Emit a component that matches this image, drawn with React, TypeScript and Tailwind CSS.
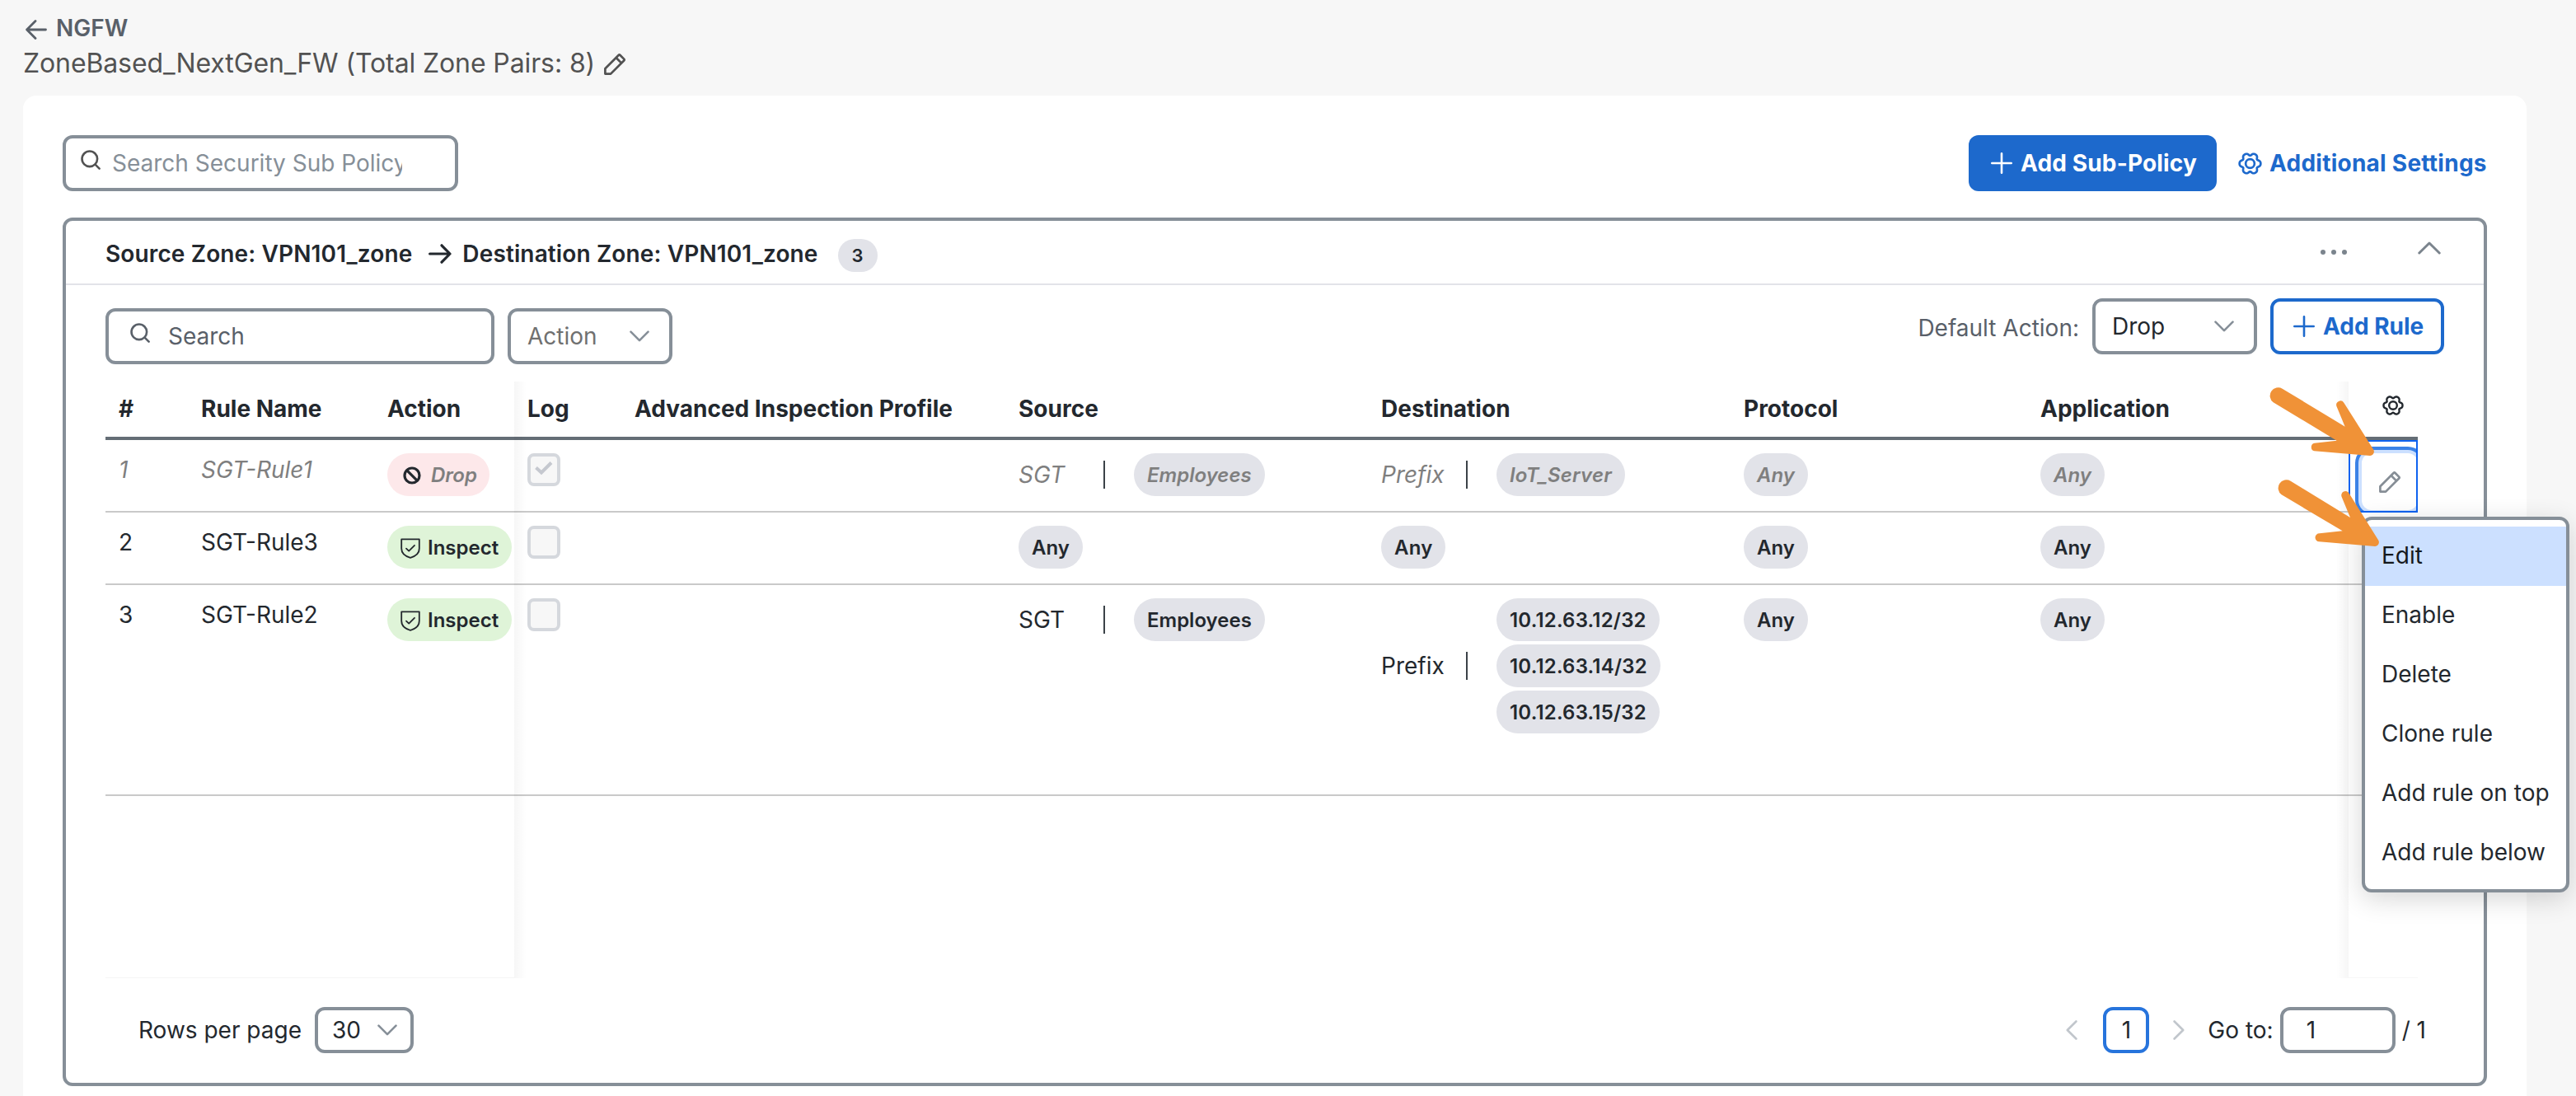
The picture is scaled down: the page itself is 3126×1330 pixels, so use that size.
import type { ReactNode } from "react";
import clsx from "clsx";

const GRID =
  "grid grid-cols-[100px_226px_170px_130px_466px_440px_440px_360px_390px_84px]";

const MENU = ["Edit", "Enable", "Delete", "Clone rule", "Add rule on top", "Add rule below"];

const HEADERS = [
  "#",
  "Rule Name",
  "Action",
  "Log",
  "Advanced Inspection Profile",
  "Source",
  "Destination",
  "Protocol",
  "Application",
];

type Match = { type?: string; values: string[] };

type Rule = {
  id: number;
  name: string;
  action: "Drop" | "Inspect";
  log: boolean;
  source: Match;
  destination: Match;
  protocol: string;
  application: string;
  disabled?: boolean;
};

const RULES: Rule[] = [
  {
    id: 1,
    name: "SGT-Rule1",
    action: "Drop",
    log: true,
    source: { type: "SGT", values: ["Employees"] },
    destination: { type: "Prefix", values: ["IoT_Server"] },
    protocol: "Any",
    application: "Any",
    disabled: true,
  },
  {
    id: 2,
    name: "SGT-Rule3",
    action: "Inspect",
    log: false,
    source: { values: ["Any"] },
    destination: { values: ["Any"] },
    protocol: "Any",
    application: "Any",
  },
  {
    id: 3,
    name: "SGT-Rule2",
    action: "Inspect",
    log: false,
    source: { type: "SGT", values: ["Employees"] },
    destination: {
      type: "Prefix",
      values: ["10.12.63.12/32", "10.12.63.14/32", "10.12.63.15/32"],
    },
    protocol: "Any",
    application: "Any",
  },
];

/* ---------- icons ---------- */

function SearchIcon({ className }: { className?: string }) {
  return (
    <svg viewBox="0 0 24 24" className={clsx("size-6 shrink-0", className)} fill="none" stroke="currentColor" strokeWidth="2.6" strokeLinecap="round">
      <circle cx="10.8" cy="10.8" r="9.3" />
      <path d="M17.6 17.6l5 5" />
    </svg>
  );
}

function Chevron({ className }: { className?: string }) {
  return (
    <svg viewBox="0 0 24 14" className={clsx("h-[14px] w-6 shrink-0", className)} fill="none" stroke="currentColor" strokeWidth="2.6" strokeLinecap="round" strokeLinejoin="round">
      <path d="M1.5 1.6L12 12.2 22.5 1.6" />
    </svg>
  );
}

function PlusIcon() {
  return (
    <svg viewBox="0 0 26 26" className="size-[26px] shrink-0" fill="none" stroke="currentColor" strokeWidth="2.6" strokeLinecap="round">
      <path d="M13 1.3v23.4M1.3 13h23.4" />
    </svg>
  );
}

// six-lobed cog outline
const GEAR_POINTS = Array.from({ length: 90 }, (_, i) => {
  const t = (i / 90) * Math.PI * 2;
  const r = 10.4 + 1.4 * Math.cos(6 * t) - 0.3 * Math.cos(12 * t);
  return `${(13 + r * Math.cos(t)).toFixed(2)},${(13 + r * Math.sin(t)).toFixed(2)}`;
}).join(" ");

function GearIcon({ className }: { className?: string }) {
  return (
    <svg viewBox="0 0 26 26" className={clsx("shrink-0", className)} fill="none" stroke="currentColor" strokeWidth="2.4" strokeLinejoin="round">
      <polygon points={GEAR_POINTS} />
      <circle cx="13" cy="13" r="4.8" />
    </svg>
  );
}

function PencilIcon({ className }: { className?: string }) {
  return (
    <svg viewBox="0 0 26 26" className={clsx("size-[26px] shrink-0", className)} fill="none" stroke="currentColor" strokeWidth="2.7" strokeLinejoin="round">
      <path d="M1.4 24.6V18.2L17.6 2Q18.6 1 19.6 2L24.2 6.6Q25.1 7.6 24.2 8.5L8.1 24.6Z" />
      <path d="M14.6 5l6.6 6.6" />
    </svg>
  );
}

function ShieldIcon() {
  return (
    <svg viewBox="0 0 24 25" className="h-[25px] w-6 shrink-0" fill="none" stroke="currentColor" strokeWidth="1.8" strokeLinecap="round" strokeLinejoin="round">
      <path d="M1.2 1.3H22.8V12.6C22.8 18.5 18.8 22 12 23.8C5.2 22 1.2 18.5 1.2 12.6Z" />
      <path d="M7 12.6l3.2 3L17 8.8" />
    </svg>
  );
}

function BlockIcon() {
  return (
    <svg viewBox="0 0 22 22" className="size-[22px] shrink-0" fill="none" stroke="currentColor" strokeWidth="3.2">
      <circle cx="11" cy="11" r="9" />
      <path d="M4.6 4.6l12.8 12.8" />
    </svg>
  );
}

/* ---------- small pieces ---------- */

function Pill({ children, disabled }: { children: ReactNode; disabled?: boolean }) {
  return (
    <span
      className={clsx(
        "inline-flex h-[52px] items-center rounded-full bg-[#e2e3e9] px-4 pt-0.5 text-2xl font-semibold",
        disabled && "text-[#7f7f7f] italic"
      )}
    >
      {children}
    </span>
  );
}

function ActionPill({ action, disabled }: { action: Rule["action"]; disabled?: boolean }) {
  if (action === "Drop") {
    return (
      <span className="flex h-[52px] w-[124px] items-center rounded-full bg-[#fde8ea] pl-[19px] pt-0.5 text-2xl font-semibold">
        <BlockIcon />
        <span className={clsx("ml-[12px]", disabled && "text-[#7f7f7f] italic")}>{action}</span>
      </span>
    );
  }
  return (
    <span className="flex h-[52px] w-[151px] items-center rounded-full bg-[#dff4d8] pl-4 pt-0.5 text-2xl font-semibold">
      <ShieldIcon />
      <span className="ml-[9px]">{action}</span>
    </span>
  );
}

function MatchCell({ match, disabled }: { match: Match; disabled?: boolean }) {
  return (
    <div className="flex items-center">
      {match.type && (
        <>
          <span className={clsx("w-[103px] tracking-normal", disabled && "text-[#7f7f7f] italic")}>{match.type}</span>
          <span className="mr-[35px] h-[34px] w-[2px] bg-[#3b4248]" />
        </>
      )}
      <div className="flex flex-col items-start gap-1">
        {match.values.map((v) => (
          <Pill key={v} disabled={disabled}>
            {v}
          </Pill>
        ))}
      </div>
    </div>
  );
}

function Checkbox({ checked }: { checked: boolean }) {
  return (
    <span className="flex size-10 items-center justify-center rounded-lg border-4 border-[#d5d8dd] bg-[#f7f7f7]">
      {checked && (
        <svg viewBox="0 0 22 18" className="mb-1 h-[18px] w-[22px]" fill="none" stroke="#c5c8cf" strokeWidth="4">
          <path d="M1.5 8.5l6.5 6L20 2.5" />
        </svg>
      )}
    </span>
  );
}

function RuleRow({ rule }: { rule: Rule }) {
  const dim = rule.disabled && "text-[#7f7f7f] italic";
  return (
    <div
      className={clsx(
        GRID,
        "border-b-2 border-[#c9c9c9]",
        rule.id === 3 ? "h-[256px]" : "h-[88px]"
      )}
    >
      <div className={clsx("px-4 pt-4", dim)}>{rule.id}</div>
      <div className={clsx("px-4 pt-4", dim)}>{rule.name}</div>
      <div className="pl-4 pt-4">
        <ActionPill action={rule.action} disabled={rule.disabled} />
      </div>
      <div className="px-4 pt-4">
        <Checkbox checked={rule.log} />
      </div>
      <div />
      <div className="px-4 pt-4">
        <MatchCell match={rule.source} disabled={rule.disabled} />
      </div>
      <div className="px-4 pt-4 tracking-[0.2px]">
        <MatchCell match={rule.destination} disabled={rule.disabled} />
      </div>
      <div className="px-4 pt-4">
        <Pill disabled={rule.disabled}>{rule.protocol}</Pill>
      </div>
      <div className="px-4 pt-4">
        <Pill disabled={rule.disabled}>{rule.application}</Pill>
      </div>
      {rule.id === 1 ? (
        <div className="relative h-[88px] overflow-hidden bg-white pl-4 pt-4">
          <div className="flex h-[69px] w-[68px] items-center justify-center rounded-xl bg-white text-[#868e96] shadow-[0_0_0_4px_#cce0ff,0_0_0_8px_#3b82e6]">
            <PencilIcon />
          </div>
          <div className="absolute inset-0 border-2 border-[#0f62f0]" />
        </div>
      ) : (
        <div />
      )}
    </div>
  );
}

function RulesTable() {
  return (
    <div className="relative mt-[18px] h-[727px] w-[2806px]">
      <div className={clsx(GRID, "h-[74px] border-b-4 border-[#646d75] font-bold")}>
        {HEADERS.map((h) => (
          <div key={h} className="whitespace-nowrap px-4 pt-4">
            {h}
          </div>
        ))}
        <div className="flex justify-center pl-6 pt-[19px]">
          <GearIcon className="size-[26px]" />
        </div>
      </div>
      {RULES.map((r) => (
        <RuleRow key={r.id} rule={r} />
      ))}
      {/* pinned column edges */}
      <div className="absolute bottom-0 left-0 top-[3px] w-[496px] border-b border-[#f5f5f5]" />
      <div className="absolute bottom-0 left-[496px] top-[3px] w-[15px] bg-linear-to-r from-black/[0.035] to-transparent" />
      <div className="absolute bottom-0 right-[84px] top-[3px] w-[15px] bg-linear-to-l from-black/[0.035] to-transparent" />
      <div className="absolute bottom-0 right-0 h-px w-[84px] bg-[#f7f7f7]" />
    </div>
  );
}

function Pager() {
  return (
    <div className="mt-[35px] flex h-14 items-center pl-[88px] pr-[70px]">
      <span>Rows per page</span>
      <div className="ml-4 flex h-14 w-[120px] items-center justify-between rounded-xl border-4 border-[#868f98] pl-[17px] pr-4">
        <span>30</span>
        <Chevron className="text-[#868f98]" />
      </div>
      <div className="ml-auto flex items-center">
        <Chevron className="rotate-90 text-[#c1c6cc]" />
        <div className="ml-[26px] flex size-14 items-center justify-center rounded-xl border-4 border-[#2774dc]">1</div>
        <Chevron className="ml-[24px] -rotate-90 text-[#c1c6cc]" />
        <span className="ml-[23px]">Go to:</span>
        <div className="ml-[8px] flex h-14 w-[140px] items-center rounded-xl border-4 border-[#868f98] pl-[28px]">1</div>
        <span className="ml-2">/ 1</span>
      </div>
    </div>
  );
}

function RowMenu() {
  return (
    <div className="absolute left-[2866px] top-[627px] h-[456px] w-[252px] rounded-xl border-4 border-[#868f98] bg-white py-2 shadow-[0_8px_32px_rgba(0,0,0,0.16)]">
      {MENU.map((m, i) => (
        <div
          key={m}
          className={clsx("flex h-[72px] items-center whitespace-nowrap pb-0.5 pl-5", i === 0 && "bg-[#cce0ff] text-[#14181c]")}
        >
          {m}
        </div>
      ))}
    </div>
  );
}

/* orange callout arrows drawn over the table */
function CalloutArrows() {
  return (
    <svg viewBox="0 0 446 300" className="absolute left-[2680px] top-[440px] h-[300px] w-[446px]" fill="#f09237">
      <g transform="scale(0.333333)">
        <path d="M269 95L497 233L466 158A15 15 0 0 1 493 146L601 317A15 15 0 0 1 588 339L385 322A15 15 0 0 1 386 293L467 284L236 145A30 30 0 0 1 269 95Z" />
        <path d="M299 431L516 564L485 489A15 15 0 0 1 512 476L619 647A15 15 0 0 1 606 669L403 652A15 15 0 0 1 404 622L488 613L266 481A30 30 0 0 1 299 431Z" />
      </g>
    </svg>
  );
}

export default function App() {
  return (
    <div className="relative h-[1330px] w-[3126px] overflow-hidden bg-[#f7f7f7] font-['Inter',sans-serif] text-[28px] leading-10 text-[#23282e]">
      <header className="h-[116px] pl-[28px] pt-[14px]">
        <div className="flex items-center text-[#596069]">
          <svg viewBox="0 0 26 24" className="ml-[3px] mt-1 h-6 w-[26px]" fill="none" stroke="currentColor" strokeWidth="2.8" strokeLinecap="round" strokeLinejoin="round">
            <path d="M24.5 12H1.6M12 1.5L1.6 12 12 22.5" />
          </svg>
          <span className="ml-[11px] font-semibold">NGFW</span>
        </div>
        <div className="mt-[3px] flex items-center text-[32px] text-[#525252]">
          <span className="tracking-[-0.11px]">ZoneBased_NextGen_FW (Total Zone Pairs: 8)</span>
          <PencilIcon className="ml-[11px] mt-0.5" />
        </div>
      </header>

      <main className="ml-[28px] h-[1300px] w-[3038px] rounded-t-[16px] bg-white px-12 pt-12">
        <div className="flex h-[68px] items-center justify-between">
          <div className="flex h-[68px] w-[480px] items-center rounded-xl border-4 border-[#868f98] pl-[18px] text-[#868f98]">
            <SearchIcon className="mb-2 text-[#525252]" />
            <span className="ml-[14px] w-[352px] overflow-hidden whitespace-nowrap">Search Security Sub Policy</span>
          </div>
          <div className="flex items-center">
            <button className="flex h-[68px] w-[301px] items-center rounded-xl bg-[#1d69cc] pl-[27px] font-bold text-white">
              <PlusIcon />
              <span className="ml-[10px] whitespace-nowrap tracking-[0.15px]">Add Sub-Policy</span>
            </button>
            <a className="ml-[26px] flex w-[302px] items-center font-bold text-[#1d69cc]">
              <GearIcon className="size-[29px]" />
              <span className="ml-[9px] whitespace-nowrap tracking-[0.25px]">Additional Settings</span>
            </a>
          </div>
        </div>

        <section className="mt-8 h-[1054px] w-[2942px] rounded-xl border-4 border-[#868f98]">
          <div className="flex h-[78px] items-center border-b-2 border-[#e2e3e9] pl-12 pr-[52px] font-semibold tracking-[0.13px]">
            <span className="pt-[3px]">Source Zone: VPN101_zone</span>
            <svg viewBox="0 0 28 24" className="ml-[20px] mt-1 h-6 w-7" fill="none" stroke="currentColor" strokeWidth="3.2" strokeLinecap="round" strokeLinejoin="round">
              <path d="M1.6 12h24.4M16 1.8L26 12 16 22.2" />
            </svg>
            <span className="ml-[13px] pt-[3px]">Destination Zone: VPN101_zone</span>
            <span className="ml-6 mt-2 flex h-10 w-12 items-center justify-center rounded-full bg-[#e2e3e9] text-[22px]">
              3
            </span>
            <svg viewBox="0 0 32 6" className="ml-auto h-[6px] w-8 fill-[#7b848d]">
              <circle cx="3" cy="3" r="3" />
              <circle cx="16" cy="3" r="3" />
              <circle cx="29" cy="3" r="3" />
            </svg>
            <svg viewBox="0 0 28 16" className="mb-[10px] ml-[86px] h-4 w-7" fill="none" stroke="#7b848d" strokeWidth="3" strokeLinecap="round" strokeLinejoin="round">
              <path d="M1.8 14L14 2l12.2 12" />
            </svg>
          </div>

          <div className="pl-12 pr-12">
            <div className="flex items-start pt-4">
              <div className="mt-3 flex h-[68px] w-[472px] items-center rounded-xl border-4 border-[#868f98] pl-[26px] text-[#596069]">
                <SearchIcon className="mb-2" />
                <span className="ml-[22px]">Search</span>
              </div>
              <div className="ml-4 mt-3 flex h-[68px] w-[200px] items-center justify-between rounded-xl border-4 border-[#868f98] pl-5 pr-6 text-[#707070]">
                <span>Action</span>
                <Chevron className="text-[#868f98]" />
              </div>
              <span className="ml-auto mt-4 text-[#596069]">Default Action:</span>
              <div className="ml-4 flex h-[68px] w-[200px] items-center justify-between rounded-xl border-4 border-[#868f98] pl-5 pr-6">
                <span>Drop</span>
                <Chevron className="text-[#868f98]" />
              </div>
              <button className="ml-4 flex h-[68px] w-[211px] items-center rounded-xl border-4 border-[#1d69cc] pl-6 font-bold text-[#1d69cc]">
                <PlusIcon />
                <span className="ml-[10px] whitespace-nowrap">Add Rule</span>
              </button>
            </div>
            <RulesTable />
          </div>
          <Pager />
        </section>
      </main>

      <RowMenu />
      <CalloutArrows />
    </div>
  );
}
